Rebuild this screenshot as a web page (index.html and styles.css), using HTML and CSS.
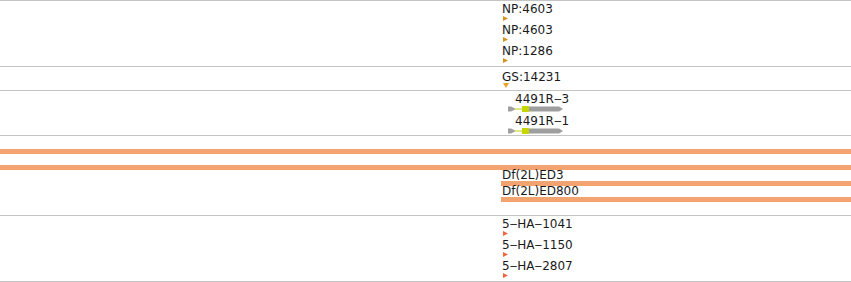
FILE: index.html
```html
<!DOCTYPE html>
<html lang="en">
<head>
  <meta charset="UTF-8" />
  <title>Tracks</title>
  <link rel="stylesheet" href="styles.css">
</head>
<body>
  <div class="tracks">

    <div class="track track-np">
      <div class="feature">
        <div class="label">NP:4603</div>
        <svg class="marker" width="5" height="5"><polygon points="0,0 5,2.5 0,5" fill="#d8921a"/></svg>
      </div>
      <div class="feature">
        <div class="label">NP:4603</div>
        <svg class="marker" width="5" height="5"><polygon points="0,0 5,2.5 0,5" fill="#d8921a"/></svg>
      </div>
      <div class="feature">
        <div class="label">NP:1286</div>
        <svg class="marker" width="5" height="5"><polygon points="0,0 5,2.5 0,5" fill="#d8921a"/></svg>
      </div>
    </div>

    <div class="track track-gs">
      <div class="feature">
        <div class="label">GS:14231</div>
        <svg class="marker down" width="6" height="5"><polygon points="0,0 6,0 3,5" fill="#eba128"/></svg>
      </div>
    </div>

    <div class="track track-tx">
      <div class="transcript">
        <div class="tx-label">4491R‒3</div>
        <svg class="tx-glyph" width="57" height="6">
          <polygon points="1,0.5 4,0.5 8,2.5 8,3.5 4,5.5 1,5.5" fill="#a0a0a0"/>
          <rect x="8" y="2.5" width="7" height="1" fill="#c6d600"/>
          <rect x="15" y="0" width="7" height="6" fill="#c6d600"/>
          <polygon points="22,0.5 52,0.5 56,3 52,5.5 22,5.5" fill="#9e9e9e"/>
        </svg>
      </div>
      <div class="transcript">
        <div class="tx-label">4491R‒1</div>
        <svg class="tx-glyph" width="57" height="6">
          <polygon points="1,0.5 4,0.5 8,2.5 8,3.5 4,5.5 1,5.5" fill="#a0a0a0"/>
          <rect x="8" y="2.5" width="7" height="1" fill="#c6d600"/>
          <rect x="15" y="0" width="7" height="6" fill="#c6d600"/>
          <polygon points="22,0.5 52,0.5 56,3 52,5.5 22,5.5" fill="#9e9e9e"/>
        </svg>
      </div>
    </div>

    <div class="track track-df">
      <div class="bar full"></div>
      <div class="gap"></div>
      <div class="bar full"></div>
      <div class="df-label">Df(2L)ED3</div>
      <div class="bar part"></div>
      <div class="df-label">Df(2L)ED800</div>
      <div class="bar part"></div>
    </div>

    <div class="track track-ha">
      <div class="feature">
        <div class="label">5‒HA‒1041</div>
        <svg class="marker" width="5" height="5"><polygon points="0,0 5,2.5 0,5" fill="#f26440"/></svg>
      </div>
      <div class="feature">
        <div class="label">5‒HA‒1150</div>
        <svg class="marker" width="5" height="5"><polygon points="0,0 5,2.5 0,5" fill="#f26440"/></svg>
      </div>
      <div class="feature">
        <div class="label">5‒HA‒2807</div>
        <svg class="marker" width="5" height="5"><polygon points="0,0 5,2.5 0,5" fill="#f26440"/></svg>
      </div>
    </div>

  </div>
</body>
</html>
```

FILE: styles.css
```css
body {
  margin: 0;
  background: white;
  font-family: "DejaVu Sans", Verdana, sans-serif;
  font-size: 12px;
  color: #1a1a1a;
}
.tracks {
  width: 851px;
  border-bottom: 1px solid #c4c4c4;
}
.track {
  border-top: 1px solid #c4c4c4;
  box-sizing: border-box;
}
.track-np {
  height: 66px;
}
.track-gs {
  height: 24px;
  padding-top: 2px;
}
.track-tx {
  height: 45px;
}
.track-df {
  height: 80px;
  padding-top: 13px;
}
.track-ha {
  height: 66px;
}
.feature {
  padding-left: 502px;
  height: 21px;
}
.label {
  padding-top: 1px;
  line-height: 14px;
  white-space: nowrap;
}
.marker {
  display: block;
  margin-left: 1px;
}
.marker.down {
  margin-top: -1px;
}
.transcript {
  padding-left: 507px;
  height: 22px;
}
.tx-label {
  padding-top: 1px;
  line-height: 14px;
  padding-left: 8px;
  white-space: nowrap;
}
.tx-glyph {
  display: block;
}
.bar {
  height: 5px;
  background: #f3a36f;
}
.bar.part {
  margin-left: 501px;
}
.gap {
  height: 11px;
}
.df-label {
  padding-left: 502px;
  line-height: 11px;
  height: 11px;
  white-space: nowrap;
}
```
